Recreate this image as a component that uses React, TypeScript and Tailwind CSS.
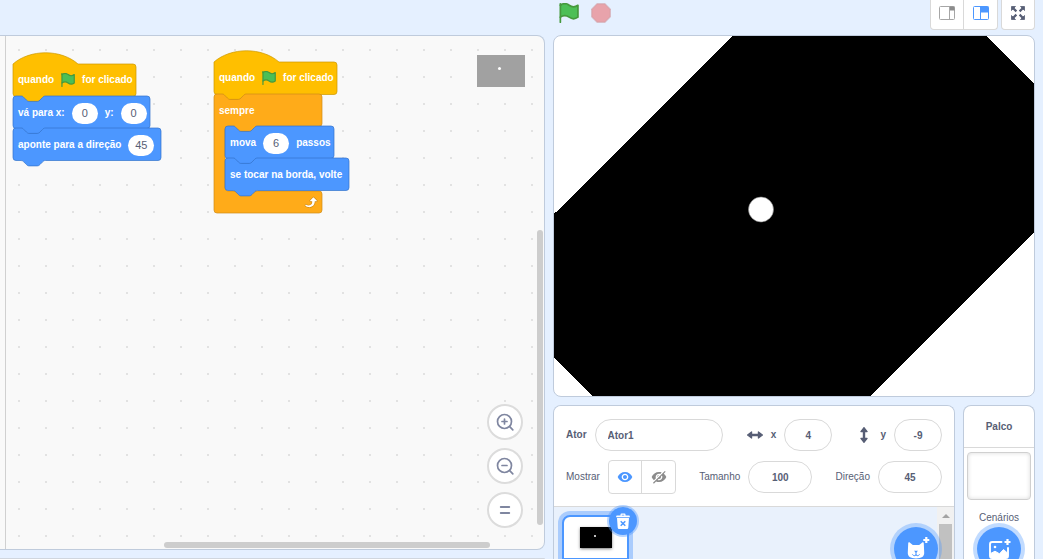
import React, { useState } from "react";
import { MdVisibility, MdVisibilityOff } from "react-icons/md";

type BlockColor = "event" | "motion";

const BLOCK_FILL: Record<BlockColor, string> = {
  event: "#FFBF00",
  motion: "#4C97FF",
};

const BLOCK_STROKE: Record<BlockColor, string> = {
  event: "#CC9900",
  motion: "#3373CC",
};

// block outlines, in pixels
const NOTCH = "H8 c1.5 0 2 .6 2.7 1.3 l2.7 2.7 c.7 .7 1.3 1.4 2.7 1.4 h8.2 c1.4 0 2 -.7 2.7 -1.4 l2.7 -2.7 c.7 -.7 1.3 -1.3 2.7 -1.3";
const NOTCH_BACK = "c-1.4 0 -2 .6 -2.7 1.3 l-2.7 2.7 c-.7 .7 -1.3 1.4 -2.7 1.4 h-8.2 c-1.4 0 -2 -.7 -2.7 -1.4 l-2.7 -2.7 c-.7 -.7 -1.3 -1.3 -2.7 -1.3";

const stackPath = (w: number) =>
  `M0 3 a3 3 0 0 1 3 -3 ${NOTCH} H${w - 3} a3 3 0 0 1 3 3 V29.5 a3 3 0 0 1 -3 3 H32.4 ${NOTCH_BACK} H3 a3 3 0 0 1 -3 -3 z`;

const hatPath = (w: number) =>
  `M0 0 c17 -15 48 -15 65 0 H${w - 3} a3 3 0 0 1 3 3 V29.5 a3 3 0 0 1 -3 3 H32.4 ${NOTCH_BACK} H3 a3 3 0 0 1 -3 -3 z`;

const foreverPath =
  `M0 3 a3 3 0 0 1 3 -3 ${NOTCH} H105 a3 3 0 0 1 3 3 V29.5 a3 3 0 0 1 -3 3 H43.4 ${NOTCH_BACK} H14 a3 3 0 0 0 -3 3 V94 a3 3 0 0 0 3 3 H105 a3 3 0 0 1 3 3 V116 a3 3 0 0 1 -3 3 H3 a3 3 0 0 1 -3 -3 z`;

function GreenFlag({ className }: { className: string }) {
  return (
    <svg viewBox="0 0 16.63 17.5" className={className}>
      <path
        d="M.75,2A6.44,6.44,0,0,1,8.44,2h0a6.44,6.44,0,0,0,7.69,0V12.4a6.44,6.44,0,0,1-7.69,0h0a6.44,6.44,0,0,0-7.69,0"
        fill="#4cbf56"
        stroke="#45993d"
        strokeWidth="1.5"
        strokeLinecap="round"
        strokeLinejoin="round"
      />
      <path d="M.75 16.75V.75" stroke="#45993d" strokeWidth="1.5" strokeLinecap="round" />
    </svg>
  );
}

interface BlockProps {
  color: BlockColor;
  width: number;
  hat?: boolean;
  children: React.ReactNode;
}

function Block({ color, width, hat, children }: BlockProps) {
  return (
    <div
      className={`relative flex h-8 items-center gap-[7px] pl-[5px] whitespace-nowrap ${hat ? "" : "pt-0.5"}`}
      style={{ width }}
    >
      <svg className="absolute top-0 left-0 overflow-visible" width={width} height="32">
        <path
          d={hat ? hatPath(width) : stackPath(width)}
          fill={BLOCK_FILL[color]}
          stroke={BLOCK_STROKE[color]}
          strokeOpacity="0.7"
        />
      </svg>
      {children}
    </div>
  );
}

function BlockText({ children }: { children: React.ReactNode }) {
  return <span className="relative">{children}</span>;
}

function BlockInput({ label, value }: { label: string; value: string }) {
  return (
    <input
      aria-label={label}
      defaultValue={value}
      className="relative h-[21px] w-[26px] rounded-full bg-white text-center text-[11px] font-normal text-[#575e75] outline-none"
    />
  );
}

function WhenFlagClicked() {
  return (
    <Block color="event" width={123} hat>
      <BlockText>quando</BlockText>
      <GreenFlag className="relative size-[14px]" />
      <BlockText>for clicado</BlockText>
    </Block>
  );
}

function ForeverBlock({ children }: { children: React.ReactNode }) {
  return (
    <div className="relative w-[108px]">
      <svg className="absolute top-0 left-0 overflow-visible" width="108" height="119">
        <path d={foreverPath} fill="#FFAB19" stroke="#CF8B17" strokeOpacity="0.7" />
      </svg>
      <div className="relative flex h-8 items-center pt-0.5 pl-[5px]">sempre</div>
      <div className="relative pl-[11px]">{children}</div>
      <div className="relative flex h-6 items-center justify-end pr-1">
        <svg viewBox="0 0 24 24" className="size-4">
          <path
            fill="#CF8B17"
            d="M23.3,11c-0.3,0.6-0.9,1-1.5,1h-1.6c-0.1,1.3-0.5,2.5-1.1,3.6c-0.9,1.7-2.3,3.2-4.1,4.1c-1.7,0.9-3.6,1.2-5.5,0.9c-1.8-0.3-3.5-1.1-4.9-2.3c-0.7-0.7-0.7-1.9,0-2.6c0.6-0.6,1.6-0.7,2.3-0.2H7c0.9,0.6,1.9,0.9,2.9,0.9s1.9-0.3,2.7-0.9c1.1-0.8,1.8-2.1,1.8-3.5h-1.5c-0.9,0-1.7-0.7-1.7-1.7c0-0.4,0.2-0.9,0.5-1.2l4.4-4.4c0.7-0.6,1.7-0.6,2.4,0L23,9.2C23.5,9.7,23.6,10.4,23.3,11z"
          />
          <path
            fill="#fff"
            d="M21.8,11h-2.6c0,1.5-0.3,2.9-1,4.2c-0.8,1.6-2.1,2.8-3.7,3.6c-1.5,0.8-3.3,1.1-4.9,0.8c-1.6-0.2-3.2-1-4.4-2.1c-0.4-0.3-0.4-0.9-0.1-1.2c0.3-0.4,0.9-0.4,1.2-0.1c1,0.7,2.2,1.1,3.4,1.1s2.3-0.3,3.3-1c0.9-0.6,1.6-1.5,2-2.6c0.3-0.9,0.4-1.8,0.2-2.8h-2.4c-0.4,0-0.7-0.3-0.7-0.7c0-0.2,0.1-0.3,0.2-0.4l4.4-4.4c0.3-0.3,0.7-0.3,0.9,0L22,9.8c0.3,0.3,0.4,0.6,0.3,0.9S22,11,21.8,11z"
          />
        </svg>
      </div>
    </div>
  );
}

const ZOOM_BUTTONS = [
  { label: "Aumentar zoom", icon: "in" },
  { label: "Diminuir zoom", icon: "out" },
  { label: "Restaurar zoom", icon: "reset" },
];

function ZoomControls() {
  return (
    <div className="absolute right-[21px] bottom-[21px] flex flex-col gap-2">
      {ZOOM_BUTTONS.map(({ label, icon }) => (
        <button
          key={icon}
          aria-label={label}
          className="flex size-9 items-center justify-center rounded-full border-2 border-[#dcdcdc] bg-white"
        >
          <svg viewBox="0 0 18 18" className="size-[18px]" fill="none" stroke="#7f86a0" strokeWidth="1.7" strokeLinecap="round">
            {icon === "reset" ? (
              <path d="M4.8 6h8.4M4.8 12h8.4" strokeWidth="2" />
            ) : (
              <>
                <circle cx="8.5" cy="8.5" r="7" />
                <path d="M13.7 13.7L16.8 16.8M6 8.5h5" />
                {icon === "in" && <path d="M8.5 6v5" />}
              </>
            )}
          </svg>
        </button>
      ))}
    </div>
  );
}

function Workspace() {
  return (
    <main className="flex min-h-0 flex-1 overflow-hidden rounded-tr-lg rounded-br-lg border border-l-0 border-[#bfcbdc] bg-[#f9f9f9]">
      <div className="w-1.5 shrink-0 border-r border-[#d0d0d0]" />
      <div className="relative flex-1 bg-[radial-gradient(circle_at_13px_13px,#e2e2e2_1px,transparent_1px)] bg-[size:27px_27px] bg-[position:0px_1px] font-bold text-white">
        <div className="absolute top-7 left-[7px]">
          <WhenFlagClicked />
          <Block color="motion" width={137}>
            <BlockText>vá para x:</BlockText>
            <BlockInput label="x" value="0" />
            <BlockText>y:</BlockText>
            <BlockInput label="y" value="0" />
          </Block>
          <Block color="motion" width={148}>
            <BlockText>aponte para a direção</BlockText>
            <BlockInput label="direção" value="45" />
          </Block>
        </div>

        <div className="absolute top-[26px] left-[208px]">
          <WhenFlagClicked />
          <ForeverBlock>
            <Block color="motion" width={109}>
              <BlockText>mova</BlockText>
              <BlockInput label="passos" value="6" />
              <BlockText>passos</BlockText>
            </Block>
            <Block color="motion" width={124}>
              <BlockText>se tocar na borda, volte</BlockText>
            </Block>
          </ForeverBlock>
        </div>

        {/* watermark of the selected sprite */}
        <div className="absolute top-[19px] right-[19px] h-8 w-12 bg-[#a1a1a1]">
          <span className="absolute top-3 left-[21px] size-[3px] rounded-full bg-white" />
        </div>

        <ZoomControls />
        <div className="absolute right-px bottom-6 h-[295px] w-1.5 rounded-full bg-[#cdcdcd]" />
        <div className="absolute right-[54px] bottom-px h-1.5 w-[326px] rounded-full bg-[#cdcdcd]" />
      </div>
    </main>
  );
}

function StageHeader() {
  return (
    <header className="flex h-[35px] shrink-0 items-start justify-between">
      <div className="flex gap-3 pt-[3px] pl-1.5">
        <button aria-label="Iniciar">
          <GreenFlag className="size-5" />
        </button>
        <button aria-label="Parar" className="opacity-50">
          <svg viewBox="0 0 14 14" className="size-5">
            <polygon
              points="4.3,0.5 9.7,0.5 13.5,4.3 13.5,9.7 9.7,13.5 4.3,13.5 0.5,9.7 0.5,4.3"
              fill="#ec5959"
              stroke="#b84848"
              strokeOpacity="0.5"
              strokeLinejoin="round"
            />
          </svg>
        </button>
      </div>

      <div className="flex gap-[3px]">
        <div className="flex h-[30px] rounded-b border border-t-0 border-[#d9d9d9] bg-white">
          <button aria-label="Palco pequeno" className="flex w-[33px] items-center justify-center border-r border-[#d9d9d9] pb-1">
            <svg viewBox="0 0 16 14" className="h-3.5 w-4" fill="none" stroke="#a6a6a6">
              <rect x="0.5" y="0.5" width="15" height="13" rx="1" />
              <path d="M10.5 .5v13" />
              <rect x="11.5" y="1" width="3.5" height="3" fill="#8c8c8c" stroke="#8c8c8c" />
            </svg>
          </button>
          <button aria-label="Palco grande" className="flex w-[33px] items-center justify-center pb-1">
            <svg viewBox="0 0 16 14" className="h-3.5 w-4" fill="none" stroke="#4c97ff">
              <rect x="0.5" y="0.5" width="15" height="13" rx="1" />
              <path d="M7.5 .5v13" />
              <rect x="8" y="1" width="7" height="5" fill="#4c97ff" />
            </svg>
          </button>
        </div>
        <button
          aria-label="Tela cheia"
          className="flex h-[30px] w-[34px] items-center justify-center rounded-b border border-t-0 border-[#d9d9d9] bg-white pb-1"
        >
          <svg viewBox="0 0 14 14" className="size-3.5" fill="#575e75" stroke="#575e75">
            <path d="M.5 .5h4l-4 4zM13.5 .5v4l-4-4zM.5 13.5v-4l4 4zM13.5 13.5h-4l4-4z" strokeWidth="0.8" strokeLinejoin="round" />
            <path d="M2 2l3.4 3.4M12 2L8.6 5.4M2 12l3.4-3.4M12 12L8.6 8.6" strokeWidth="2.2" />
          </svg>
        </button>
      </div>
    </header>
  );
}

function Stage() {
  return (
    <section className="shrink-0 overflow-hidden rounded-lg border border-[#bfcbdc] bg-white">
      <svg viewBox="0 0 480 360" className="block w-full" shapeRendering="crispEdges">
        <polygon points="179,0 432,0 480,48 480,196 316,360 38,360 0,322 0,178" fill="#000" />
        <circle cx="207" cy="173.5" r="12.5" fill="#fff" stroke="#888" strokeWidth="0.6" shapeRendering="auto" />
      </svg>
    </section>
  );
}

const pill = "h-8 rounded-full border border-[#d9d9d9] bg-white font-bold text-[#575e75] outline-none";

interface NumberFieldProps {
  id: string;
  label: string;
  value: string;
  wide?: boolean;
  icon?: React.ReactNode;
}

function NumberField({ id, label, value, wide, icon }: NumberFieldProps) {
  return (
    <div className="flex items-center gap-2">
      {icon}
      <label htmlFor={id} className={wide ? "" : "font-bold"}>
        {label}
      </label>
      <input id={id} defaultValue={value} className={`${pill} text-center ${wide ? "w-16" : "w-12"}`} />
    </div>
  );
}

function ArrowIcon({ vertical }: { vertical?: boolean }) {
  return (
    <svg viewBox="0 0 16 16" className={vertical ? "size-4 rotate-90" : "size-4"} fill="#575e75" stroke="#575e75" strokeLinejoin="round">
      <path d="M.6 8L4.6 4.9v6.2zM15.4 8L11.4 4.9v6.2z" strokeWidth="1.2" />
      <path d="M3 8h10" strokeWidth="2.4" />
    </svg>
  );
}

function SpriteInfo() {
  const [visible, setVisible] = useState(true);

  return (
    <div className="flex flex-col gap-2 border-b border-[#d9d9d9] bg-white p-3">
      <div className="flex h-[34px] items-center justify-between">
        <div className="flex items-center gap-2">
          <label htmlFor="sprite-name" className="font-bold">
            Ator
          </label>
          <input id="sprite-name" defaultValue="Ator1" className={`${pill} w-32 px-3`} />
        </div>
        <NumberField id="sprite-x" label="x" value="4" icon={<ArrowIcon />} />
        <NumberField id="sprite-y" label="y" value="-9" icon={<ArrowIcon vertical />} />
      </div>

      <div className="flex h-[34px] items-center justify-between">
        <div className="flex items-center gap-2">
          <span>Mostrar</span>
          <div className="flex h-[34px] w-[68px] rounded border border-[#d9d9d9]">
            <button
              aria-label="Mostrar ator"
              onClick={() => setVisible(true)}
              className={`flex flex-1 items-center justify-center border-r border-[#d9d9d9] ${visible ? "text-[#4c97ff]" : "text-[#8c8c8c]"}`}
            >
              <MdVisibility className="size-4" />
            </button>
            <button
              aria-label="Esconder ator"
              onClick={() => setVisible(false)}
              className={`flex flex-1 items-center justify-center ${visible ? "text-[#8c8c8c]" : "text-[#4c97ff]"}`}
            >
              <MdVisibilityOff className="size-4 -scale-x-100" />
            </button>
          </div>
        </div>
        <NumberField id="sprite-size" label="Tamanho" value="100" wide />
        <NumberField id="sprite-direction" label="Direção" value="45" wide />
      </div>
    </div>
  );
}

function SpriteTile() {
  return (
    <div className="relative mt-2 ml-2 w-[67px] rounded-lg border-2 border-[#4c97ff] bg-white ring-4 ring-[#4c97ff]/40">
      <div className="flex h-[41px] items-center justify-center">
        <div className="relative h-[21px] w-8 bg-black shadow-sm shadow-black/40">
          <span className="absolute top-2 left-3.5 size-0.5 rounded-full bg-white" />
        </div>
      </div>
      <div className="h-5 bg-[#4c97ff]" />
      <button
        aria-label="Apagar Ator1"
        className="absolute -top-2.5 -right-2.5 flex size-7 items-center justify-center rounded-full bg-[#4c97ff] ring-2 ring-[#4c97ff]/40"
      >
        <svg viewBox="0 0 14 16" className="h-4 w-3.5" fill="#fff">
          <path d="M4.5 2.5V1.5a1 1 0 0 1 1-1h3a1 1 0 0 1 1 1v1h3.5a.8 .8 0 0 1 .8 .8v1H.2v-1a.8 .8 0 0 1 .8-.8zM5.7 2.5h2.6v-.8H5.7z" fillRule="evenodd" />
          <path d="M1 5h12l-.7 9.5a1.5 1.5 0 0 1-1.5 1.5H3.2a1.5 1.5 0 0 1-1.5-1.5z" />
          <path d="M4.7 8.2l4.6 4.6M9.3 8.2l-4.6 4.6" stroke="#4c97ff" strokeWidth="1.5" />
        </svg>
      </button>
    </div>
  );
}

const addButton = "absolute flex size-11 items-center justify-center rounded-full bg-[#4c97ff] ring-4 ring-[#4c97ff]/35";

function SpritePane() {
  return (
    <section className="relative flex flex-1 flex-col overflow-hidden rounded-t-lg border border-b-0 border-[#bfcbdc] bg-[#e9f1fc]">
      <SpriteInfo />
      <div className="flex flex-1">
        <div className="flex-1">
          <SpriteTile />
        </div>
        <div className="flex w-[17px] flex-col items-center bg-[#f1f1f1]">
          <svg viewBox="0 0 17 17" className="size-[17px]">
            <path d="M5 11h8L9 7z" fill="#a3a3a3" />
          </svg>
          <div className="w-[13px] flex-1 bg-[#c1c1c1]" />
        </div>
      </div>
      <button aria-label="Selecione um Ator" className={`${addButton} top-[121px] right-4`}>
        <svg viewBox="0 0 24 24" className="size-6 overflow-visible" fill="#fff">
          <path d="M4.2 6.6c0-1.3 .9-1.6 1.8-.9L8.8 8h6.4l2.8-2.3c.9-.7 1.8-.4 1.8 .9l.4 9c.2 4-2.7 5.9-8.2 5.9s-8.4-1.9-8.2-5.9z" />
          <path d="M22.3 0v6M19.3 3h6" stroke="#fff" strokeWidth="2.2" />
          <path d="M10 13.8h4L12 16z" fill="#4c97ff" />
          <path d="M12 15.5v2.5M8.6 17.6c.2 1.6 3.4 1.6 3.4 0 0 1.6 3.2 1.6 3.4 0" fill="none" stroke="#4c97ff" strokeLinecap="round" />
        </svg>
      </button>
    </section>
  );
}

function StagePane() {
  return (
    <section className="relative flex w-[72px] shrink-0 flex-col items-center overflow-hidden rounded-t-lg border border-b-0 border-[#bfcbdc] bg-white">
      <h2 className="flex h-[42px] w-full items-center justify-center border-b border-[#d9d9d9] font-bold">Palco</h2>
      <div className="mt-1 h-12 w-16 rounded border border-[#d0d0d0] bg-white shadow-[inset_0_0_4px_#d9d9d9]" />
      <span className="mt-2.5">Cenários</span>
      <button aria-label="Selecione um Cenário" className={`${addButton} top-[121px]`}>
        <svg viewBox="0 0 24 24" className="size-6" fill="none" stroke="#fff">
          <path d="M14.5 5H5.3A2.3 2.3 0 0 0 3 7.3v11.4A2.3 2.3 0 0 0 5.3 21h13.4a2.3 2.3 0 0 0 2.3-2.3V11" strokeWidth="1.9" strokeLinecap="round" />
          <path d="M3.5 16.5l4.5-2.3 4.5 2.6 4-4.3 4 3.6v4.5H3.5z" fill="#fff" strokeLinejoin="round" />
          <circle cx="8" cy="10" r="1.3" fill="#fff" stroke="none" />
          <path d="M20.5 2v6M17.5 5h6" strokeWidth="2.2" />
        </svg>
      </button>
    </section>
  );
}

function App() {
  return (
    <div className="flex h-screen gap-2 overflow-hidden bg-[#e5f0ff] pr-2 font-['Liberation_Sans',Arial,sans-serif] text-[10px] leading-4 text-[#575e75]">
      <div className="flex min-w-0 flex-1 flex-col pt-[35px]">
        <Workspace />
        {/* backpack */}
        <div className="mt-2 h-px shrink-0 rounded-tr-lg bg-[#d0d6de]" />
      </div>

      <div className="flex w-[482px] shrink-0 flex-col">
        <StageHeader />
        <Stage />
        <div className="mt-2 flex min-h-0 flex-1 gap-2">
          <SpritePane />
          <StagePane />
        </div>
      </div>
    </div>
  );
}

export default App;
